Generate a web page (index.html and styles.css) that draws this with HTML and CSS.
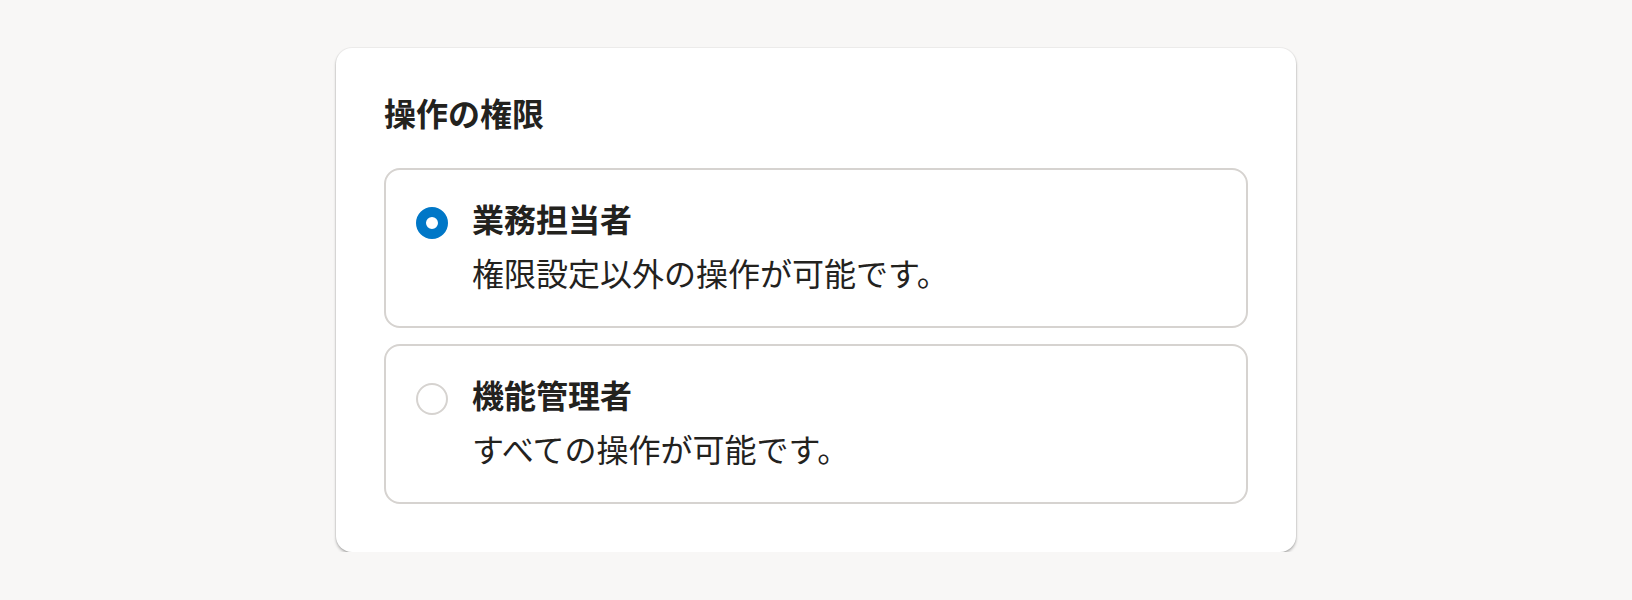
FILE: index.html
```html
<!DOCTYPE html>
<html lang="ja">
<head>
    <meta charset="UTF-8">
    <meta name="viewport" content="width=device-width, initial-scale=1.0">
    <title>操作の権限</title>
    <link rel="stylesheet" href="styles.css">
</head>
<body>

    <div class="card">
        <h2 class="card-title">操作の権限</h2>

        <div class="options">
            <label class="option">
                <span class="radio checked"></span>
                <span class="option-body">
                    <span class="option-label">業務担当者</span>
                    <span class="option-desc">権限設定以外の操作が可能です。</span>
                </span>
            </label>

            <label class="option">
                <span class="radio"></span>
                <span class="option-body">
                    <span class="option-label">機能管理者</span>
                    <span class="option-desc">すべての操作が可能です。</span>
                </span>
            </label>
        </div>
    </div>

</body>
</html>
```

FILE: styles.css
```css
body {
    font-family: "Noto Sans CJK JP", "Noto Sans", sans-serif;
    margin: 0;
    padding: 48px 0 0;
    background-color: #f8f7f6;
    color: #23221e;
}
.card {
    box-sizing: border-box;
    width: 960px;
    margin: 0 auto;
    padding: 48px 48px 48px;
    background-color: #fff;
    border-radius: 16px;
    box-shadow: 0 0 0 1px rgba(0, 0, 0, 0.04), 0 2px 3px rgba(0, 0, 0, 0.28);
}
.card-title {
    margin: 0 0 40px;
    font-size: 32px;
    line-height: 32px;
    font-weight: bold;
}
.options {
    display: flex;
    flex-direction: column;
    gap: 16px;
}
.option {
    display: flex;
    align-items: flex-start;
    gap: 24px;
    padding: 24px 30px 30px;
    border: 2px solid #d6d3d0;
    border-radius: 16px;
    cursor: pointer;
}
.radio {
    box-sizing: border-box;
    flex: none;
    width: 32px;
    height: 32px;
    margin-top: 13px;
    border: 2px solid #d6d3d0;
    border-radius: 50%;
    background-color: #fff;
}
.radio.checked {
    border: 10px solid #0077c7;
}
.option-body {
    display: flex;
    flex-direction: column;
}
.option-label {
    font-size: 32px;
    line-height: 48px;
    font-weight: bold;
}
.option-desc {
    margin-top: 6px;
    font-size: 32px;
    line-height: 48px;
}
```
